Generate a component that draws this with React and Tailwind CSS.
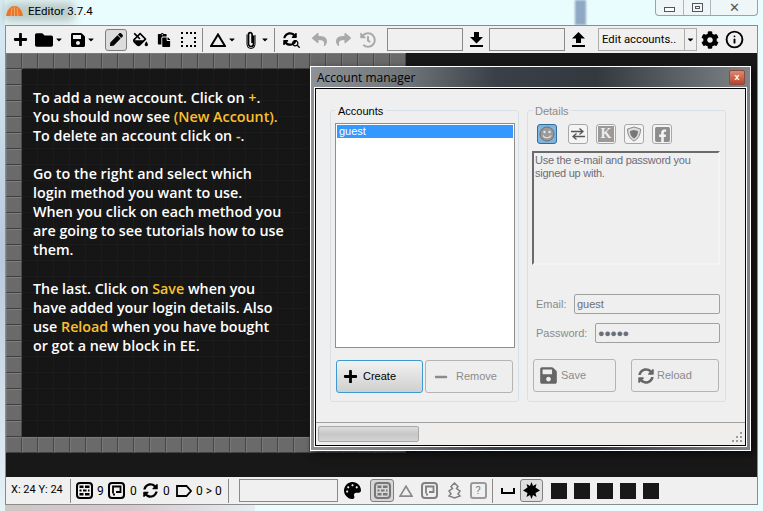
import React from "react";
import {
  FaPlus, FaFolder, FaSave, FaPen, FaFillDrip, FaPaste, FaReply, FaShare, FaHistory,
  FaCog, FaPalette, FaSyncAlt, FaCaretDown, FaMinus, FaFacebookSquare, FaSearch,
} from "react-icons/fa";
import { FiInfo } from "react-icons/fi";

const Caret = () => <FaCaretDown className="text-black" size={9} />;
const Slot = ({ w, children, className = "" }) => (
  <div className={`flex items-center justify-center shrink-0 h-full ${w} ${className}`}>{children}</div>
);
const Gap = ({ w }) => <div className={`shrink-0 ${w}`} />;
const Sep = () => <div className="w-px h-[24px] bg-[#8a8a8a] shrink-0" />;

const ArrowBar = ({ up }) => (
  <svg width="13" height="15" viewBox="0 0 13 15">
    <path d={up ? "M6.5 0 13 6.5H9V11H4V6.5H0Z" : "M4 0H9V5H13L6.5 11.5 0 5H4Z"} fill="#000" />
    <rect y="13" width="13" height="2" fill="#000" />
  </svg>
);
const Triangle = ({ size = 16, color = "#000", sw = 2 }) => (
  <svg width={size} height={size - 2} viewBox="0 0 16 14">
    <path d="M8 1.5 15 13H1Z" fill="none" stroke={color} strokeWidth={sw} />
  </svg>
);
const Clip = () => (
  <svg width="10" height="18" viewBox="0 0 10 18">
    <path d="M7.500 4.500V13a2.500 2.500 0 0 1-5 0V3.500a1.800 1.800 0 0 1 3.600 0V12" fill="none" stroke="#000" strokeWidth="1.700" />
    <path d="M9 4V13.500a4 4 0 0 1-8 0V3.500" fill="none" stroke="#000" strokeWidth="1" />
  </svg>
);
const Brick = ({ color = "#000" }) => (
  <svg width="17" height="17" viewBox="0 0 17 17">
    <rect x="1" y="1" width="15" height="15" rx="3" fill="none" stroke={color} strokeWidth="2" />
    <path d="M3.500 3.500h4v2.500h-4zM9 3.500h4.500v2.500H9zM3.500 7.500h2v2h-2zM7 7.500h3.500v2H7zM12 7.500h1.500v2H12zM3.500 11h4v2.500h-4zM9 11h4.500v2.500H9z" fill={color} />
  </svg>
);
const Deco = ({ color = "#000" }) => (
  <svg width="17" height="17" viewBox="0 0 17 17">
    <rect x="1" y="1" width="15" height="15" rx="3" fill="none" stroke={color} strokeWidth="2" />
    <path d="M5 11.500V4.500h7.500v5.500H8" fill="none" stroke={color} strokeWidth="1.800" />
    <path d="M7 12.500h-2" stroke={color} strokeWidth="1.800" />
  </svg>
);
const Tag = () => (
  <svg width="16" height="12" viewBox="0 0 16 12">
    <path d="M1 1H10.500L15 6 10.500 11H1Z" fill="none" stroke="#000" strokeWidth="1.800" />
  </svg>
);
const Dashed = () => <div className="w-[15px] h-[15px] border-2 border-dotted border-black" />;
const SearchRefresh = () => (
  <div className="relative w-[15px] h-[15px]">
    <FaSyncAlt size={14} className="text-black" />
    <FaSearch size={8} className="absolute right-[-2px] bottom-[-1px] text-black" />
  </div>
);
const Star = () => (
  <svg width="17" height="17" viewBox="0 0 17 17">
    <path d="M8.500 0 10 4 13.500 2 12.500 5.500 17 8.500 12.500 11 13.500 15 10 13 8.500 17 7 13 3.500 15 4.500 11 0 8.500 4.500 5.500 3.500 2 7 4Z" fill="#000" />
  </svg>
);
const Smile = () => (
  <svg width="16" height="16" viewBox="0 0 16 16">
    <circle cx="8" cy="8" r="7" fill="#9a9a9a" stroke="#6f6f6f" />
    <circle cx="5.500" cy="6" r="1.200" fill="#e8e8e8" />
    <circle cx="10.500" cy="6" r="1.200" fill="#e8e8e8" />
    <path d="M4 9.500c1.500 3 6.500 3 8 0" fill="none" stroke="#e8e8e8" strokeWidth="1.200" />
  </svg>
);
const Swap = () => (
  <svg width="16" height="14" viewBox="0 0 16 14">
    <path d="M1 4.500h11M9.500 1.500 13 4.500 9.500 7.500" fill="none" stroke="#555" strokeWidth="1.300" />
    <path d="M15 9.500H4M6.500 6.500 3 9.500 6.500 12.500" fill="none" stroke="#555" strokeWidth="1.300" />
  </svg>
);
const Shield = () => (
  <svg width="16" height="16" viewBox="0 0 16 16">
    <path d="M8 1 14.500 3C14.500 9 12 13 8 15 4 13 1.500 9 1.500 3Z" fill="#dcdcdc" stroke="#8a8a8a" />
    <path d="M8 4 12 5C12 9 10.500 11 8 12.500 5.500 11 4 9 4 5Z" fill="#777" />
  </svg>
);

const DetailIcon = ({ active, children }) => (
  <div className={`w-[20px] h-[20px] rounded-[3px] border flex items-center justify-center shrink-0 ${active ? "border-[#2f6f9f] bg-[#7fb4dc]" : "border-[#a8a8a8] bg-[#f4f4f4]"}`}>
    {children}
  </div>
);
const DlgButton = ({ w, className = "", children }) => (
  <div className={`h-[33px] ${w} rounded-[3px] border border-[#b4b4b4] bg-[#eeeeee] flex items-center text-[#8b8b8b] shrink-0 ${className}`}>
    {children}
  </div>
);

const ui = { fontFamily: '"Liberation Sans", Arial, sans-serif' };
const seg = { fontFamily: 'Roboto, sans-serif' };
const Y = ({ children }) => <span className="text-[#fbc02d]">{children}</span>;

const cells = Array.from({ length: 625 }, (_, i) => {
  const r = Math.floor(i / 25);
  const c = i % 25;
  return r === 0 || c === 0 || r === 24 || c === 24;
});

export default function App() {
  return (
    <div className="relative w-[763px] h-[511px] overflow-hidden bg-[#e9fcfe]" style={ui}>
      {/* blurred aero backdrop */}
      <div className="absolute left-[575px] top-0 w-[11px] h-[25px] bg-[#8fa9c4] blur-[1px]" />
      <div className="absolute left-0 top-0 w-[5px] h-[511px] bg-gradient-to-b from-[#d8eef6] via-[#b8c9dc] to-[#e6f2f6]" />
      <div className="absolute left-[4px] top-[2px] w-[70px] h-[20px] bg-[#a9b5b0] blur-[5px] opacity-70" />
      <div className="absolute left-[5px] bottom-0 w-[250px] h-[6px] bg-gradient-to-r from-[#cfc6c6] via-[#d8c8ce] to-[#e4eef2]" />

      {/* caption */}
      <div className="relative h-[25px] flex items-start">
        <div className="flex items-center pl-[6px] pt-[3px] gap-[5px]">
          <svg width="17" height="10" viewBox="0 0 17 10">
            <path d="M0 10C1 3 5 0 8.500 0S16 3 17 10Z" fill="#e8772b" />
            <path d="M5 10 6 2M8.500 10V1M12 10 11 2" stroke="#f7b27a" strokeWidth="0.800" />
          </svg>
          <span className="text-[11.500px] leading-[16px] text-black" style={seg}>EEditor 3.7.4</span>
        </div>
        <div className="ml-auto mr-[5px] w-[103px] h-[16px] flex rounded-b-[4px] border border-t-0 border-[#9aa3ad] bg-[#eef6f8]">
          <div className="w-[28px] border-r border-[#aeb6bd] flex items-end justify-center pb-[3px]">
            <div className="w-[11px] h-[5px] border border-[#555] bg-white" />
          </div>
          <div className="w-[27px] border-r border-[#aeb6bd] flex items-center justify-center">
            <div className="w-[11px] h-[9px] border border-[#555] flex items-center justify-center"><div className="w-[5px] h-[3px] border border-[#555]" /></div>
          </div>
          <div className="flex-1 flex items-center justify-center text-[#555] text-[13px] leading-none">✕</div>
        </div>
      </div>

      {/* window */}
      <div className="relative ml-[5px] w-[753px] h-[480px] flex flex-col border border-[#8b8b8b] bg-[#f0f0f0]">
        {/* toolbar */}
        <div className="h-[27px] flex items-center shrink-0 pl-[2px]">
          <Slot w="w-[24px]"><FaPlus size={15} className="text-black" /></Slot>
          <Slot w="w-[24px]"><FaFolder size={18} className="text-black" /></Slot>
          <Slot w="w-[6px]"><Caret /></Slot>
          <Gap w="w-[6px]" />
          <Slot w="w-[19px]"><FaSave size={16} className="text-black" /></Slot>
          <Slot w="w-[8px]"><Caret /></Slot>
          <Gap w="w-[10px]" />
          <div className="w-[22px] h-[22px] shrink-0 rounded-[3px] border border-[#7d7d7d] bg-[#dcdcdc] flex items-center justify-center"><FaPen size={13} className="text-black" /></div>
          <Slot w="w-[26px]"><FaFillDrip size={15} className="text-black" /></Slot>
          <Slot w="w-[22px]"><FaPaste size={14} className="text-black" /></Slot>
          <Slot w="w-[27px]"><Dashed /></Slot>
          <Sep />
          <Gap w="w-[4px]" />
          <Slot w="w-[21px]"><Triangle /></Slot>
          <Slot w="w-[8px]"><Caret /></Slot>
          <Gap w="w-[4px]" />
          <Slot w="w-[22px]"><Clip /></Slot>
          <Slot w="w-[6px]"><Caret /></Slot>
          <Gap w="w-[6px]" />
          <Sep />
          <Slot w="w-[30px]"><SearchRefresh /></Slot>
          <Slot w="w-[29px]"><FaReply size={15} className="text-[#a9a9a9]" /></Slot>
          <Slot w="w-[19px]"><FaShare size={15} className="text-[#a9a9a9]" /></Slot>
          <Slot w="w-[30px]"><FaHistory size={16} className="text-[#a9a9a9]" /></Slot>
          <Gap w="w-[4px]" />
          <div className="w-[76px] h-[23px] border border-[#8a8a8a] bg-[#f0f0f0] shrink-0" />
          <Slot w="w-[26px]"><ArrowBar /></Slot>
          <div className="w-[76px] h-[23px] border border-[#8a8a8a] bg-[#f0f0f0] shrink-0" />
          <Slot w="w-[26px]"><ArrowBar up /></Slot>
          <Gap w="w-[7px]" />
          <div className="w-[99px] h-[23px] border border-[#adadad] flex shrink-0">
            <div className="w-[86px] border-r border-[#adadad] text-[11.300px] leading-[21px] text-black pl-[3px] whitespace-nowrap" style={seg}>Edit accounts..</div>
            <div className="flex-1 flex items-center justify-center"><Caret /></div>
          </div>
          <Slot w="w-[26px]"><FaCog size={18} className="text-black" /></Slot>
          <Slot w="w-[23px]"><FiInfo size={19} className="text-black" strokeWidth={2.4} /></Slot>
        </div>

        {/* canvas */}
        <div className="relative flex-1 bg-[#181818] overflow-hidden">
          <div className="grid grid-cols-[repeat(25,16px)] grid-rows-[repeat(25,16px)]">
            {cells.map((b, i) => (
              <div key={i} className={b
                ? "border border-t-[#7c7c7c] border-l-[#787878] border-r-[#484848] border-b-[#404040] bg-[#6a6a6a]"
                : "border-r border-b border-[#1b1b1b] bg-[#161616]"} />
            ))}
          </div>
          <div className="absolute left-[27px] top-[35px] text-[14.300px] leading-[19px] font-semibold text-white whitespace-nowrap" style={{ fontFamily: '"Open Sans", sans-serif' }}>
            <p>To add a new account. Click on <Y>+</Y>.</p>
            <p>You should now see <Y>(New Account).</Y></p>
            <p>To delete an account click on <Y>-</Y>.</p>
            <p className="mt-[19px]">Go to the right and select which<br />login method you want to use.<br />When you click on each method you<br />are going to see tutorials how to use<br />them.</p>
            <p className="mt-[20px]">The last. Click on <Y>Save</Y> when you<br />have added your login details. Also<br />use <Y>Reload</Y> when you have bought<br />or got a new block in EE.</p>
          </div>

          {/* dialog */}
          <div className="absolute left-[304px] top-[13px] w-[441px] h-[385px] border border-white bg-[linear-gradient(90deg,#8e9296_0%,#6f7479_22%,#3a4047_42%,#33393f_65%,#7f8488_100%)] shadow-[3px_3px_8px_rgba(0,0,0,0.6)] flex flex-col px-[4px] pb-[4px]">
            <div className="h-[21px] flex items-center shrink-0">
              <span className="text-[12px] text-black pl-[2px] pt-[1px]" style={{ fontFamily: '"Open Sans", sans-serif' }}>Account manager</span>
              <div className="ml-auto w-[16px] h-[15px] mr-[1px] rounded-[2px] border border-[#8c4a3a] bg-gradient-to-b from-[#d98a78] to-[#b8432c] flex items-center justify-center text-white text-[9px] font-bold leading-none">x</div>
            </div>
            <div className="flex-1 border border-black outline outline-white bg-[#efefef] flex flex-col text-[11px]">
              <div className="flex-1 flex pt-[21px] pl-[14px]">
                {/* accounts group */}
                <div className="relative w-[189px] h-[292px] border border-[#d8e0e6] rounded-[3px] px-[4px] pt-[12px]">
                  <span className="absolute left-[4px] top-[-7px] bg-[#efefef] px-[3px] leading-[14px] text-black">Accounts</span>
                  <div className="w-[180px] h-[225px] border border-[#8e8e8e] bg-white p-px">
                    <div className="h-[13px] bg-[#3399ff] text-white leading-[13px] pl-[2px]">guest</div>
                  </div>
                  <div className="flex mt-[12px] ml-[1px] gap-[2px]">
                    <DlgButton w="w-[87px]" className="!border-[#3c9ad0] !bg-gradient-to-b !from-[#f2f2f2] !to-[#cfcfcf] !text-black pl-[6px] gap-[5px]">
                      <FaPlus size={15} className="text-black" /><span>Create</span>
                    </DlgButton>
                    <DlgButton w="w-[88px]" className="pl-[8px] gap-[8px]">
                      <FaMinus size={14} className="text-[#8b8b8b]" /><span>Remove</span>
                    </DlgButton>
                  </div>
                </div>
                {/* details group */}
                <div className="relative ml-[8px] w-[199px] h-[292px] border border-[#d8e0e6] rounded-[3px] px-[4px] pt-[13px] text-[#8b8b8b]">
                  <span className="absolute left-[5px] top-[-7px] bg-[#efefef] px-[2px] leading-[14px]">Details</span>
                  <div className="flex pl-[5px] gap-[8px]">
                    <DetailIcon active><Smile /></DetailIcon>
                    <div className="w-[3px] shrink-0 -ml-[8px]" />
                    <DetailIcon><Swap /></DetailIcon>
                    <DetailIcon><span className="w-[16px] h-[16px] bg-[#9a9a9a] text-[#eee] text-[14px] leading-[16px] font-bold text-center" style={{ fontFamily: '"Liberation Serif", serif' }}>K</span></DetailIcon>
                    <DetailIcon><Shield /></DetailIcon>
                    <DetailIcon><FaFacebookSquare size={17} className="text-[#8d8d8d]" /></DetailIcon>
                  </div>
                  <div className="mt-[7px] w-[188px] h-[114px] border-2 border-[#6b6b6b] border-r-[#f4f4f4] border-b-[#f4f4f4] pl-[1px] text-[#6d6d7a] leading-[13px] pt-[1px] tracking-[-0.250px]">
                    Use the e-mail and password you<br />signed up with.
                  </div>
                  <div className="flex items-center mt-[29px]">
                    <span className="w-[42px] pl-[4px] shrink-0">Email:</span>
                    <div className="w-[146px] h-[20px] border border-[#a0a0a0] rounded-[2px] text-[#6d6d7a] leading-[18px] pl-[2px]">guest</div>
                  </div>
                  <div className="flex items-center mt-[9px]">
                    <span className="w-[63px] pl-[4px] shrink-0">Password:</span>
                    <div className="w-[125px] h-[20px] border border-[#a0a0a0] rounded-[2px] text-[#6d6d7a] leading-[18px] pl-[2px] tracking-[-0.500px]">●●●●●</div>
                  </div>
                  <div className="flex mt-[16px] pl-[1px] gap-[15px]">
                    <DlgButton w="w-[83px]" className="pl-[5px] gap-[3px]"><FaSave size={19} className="text-[#666]" /><span>Save</span></DlgButton>
                    <DlgButton w="w-[88px]" className="pl-[6px] gap-[3px]"><FaSyncAlt size={16} className="text-[#666]" /><span>Reload</span></DlgButton>
                  </div>
                </div>
              </div>
              {/* status strip */}
              <div className="relative h-[23px] border-t border-[#a0a0a0] bg-[#f0eded] flex items-center pl-[2px] shrink-0">
                <div className="w-[101px] h-[16px] rounded-[2px] border border-[#a8a8a8] bg-gradient-to-b from-[#dedede] via-[#c6c6c6] to-[#d4d4d4]" />
                <svg className="absolute right-[2px] bottom-[2px]" width="11" height="11" viewBox="0 0 11 11">
                  <path d="M8 0h2v2H8zM4 4h2v2H4zM8 4h2v2H8zM0 8h2v2H0zM4 8h2v2H4zM8 8h2v2H8z" fill="#9a9a9a" />
                </svg>
              </div>
            </div>
          </div>
        </div>

        {/* status bar */}
        <div className="h-[27px] flex items-center shrink-0 text-[12px] text-black" style={seg}>
          <span className="w-[64px] pl-[5px] whitespace-nowrap shrink-0 text-[11px]">X: 24 Y: 24</span>
          <Sep />
          <Slot w="w-[26px]"><Brick /></Slot>
          <span className="w-[10px] shrink-0">9</span>
          <Slot w="w-[19px]"><Deco /></Slot>
          <Gap w="w-[4px]" />
          <span className="w-[8px] shrink-0">0</span>
          <Slot w="w-[25px]"><FaSyncAlt size={15} className="text-black" /></Slot>
          <span className="w-[8px] shrink-0">0</span>
          <Slot w="w-[25px]"><Tag /></Slot>
          <span className="w-[32px] shrink-0 whitespace-nowrap">0 &gt; 0</span>
          <Sep />
          <Gap w="w-[10px]" />
          <div className="w-[99px] h-[23px] border border-[#8a8a8a] shrink-0" />
          <Slot w="w-[29px]"><FaPalette size={17} className="text-black" /></Slot>
          <Gap w="w-[3px]" />
          <div className="w-[24px] h-[23px] rounded-[3px] border border-[#808080] bg-[#d6d6d6] flex items-center justify-center shrink-0"><Brick color="#777" /></div>
          <Slot w="w-[23px]"><Triangle size={14} color="#8a8a8a" /></Slot>
          <Slot w="w-[25px]"><Deco color="#808080" /></Slot>
          <Slot w="w-[24px]">
            <svg width="15" height="17" viewBox="0 0 15 17"><path d="M7.500 1 11 4.500 9.500 6.500 13 9 11 12 13 14 7.500 16 2 14 4 12 2 9 5.500 6.500 4 4.500Z" fill="none" stroke="#808080" strokeWidth="1.500" /></svg>
          </Slot>
          <Slot w="w-[24px]"><div className="w-[17px] h-[17px] border-2 border-[#9a9a9a] rounded-[3px] text-[#808080] text-[11px] leading-[13px] text-center">?</div></Slot>
          <Gap w="w-[2px]" />
          <Sep />
          <Slot w="w-[27px]" className="pl-[3px]">
            <svg width="14" height="6" viewBox="0 0 14 6"><path d="M1 0V5H13V0" fill="none" stroke="#000" strokeWidth="2" /></svg>
          </Slot>
          <div className="w-[23px] h-[23px] rounded-[3px] border border-[#808080] bg-[#e0e0e0] flex items-center justify-center shrink-0"><Star /></div>
          <div className="flex gap-[7px] ml-[8px]">
            {[0, 1, 2, 3, 4].map((i) => <div key={i} className="w-[16px] h-[16px] bg-[#181818]" />)}
          </div>
        </div>
      </div>
    </div>
  );
}
